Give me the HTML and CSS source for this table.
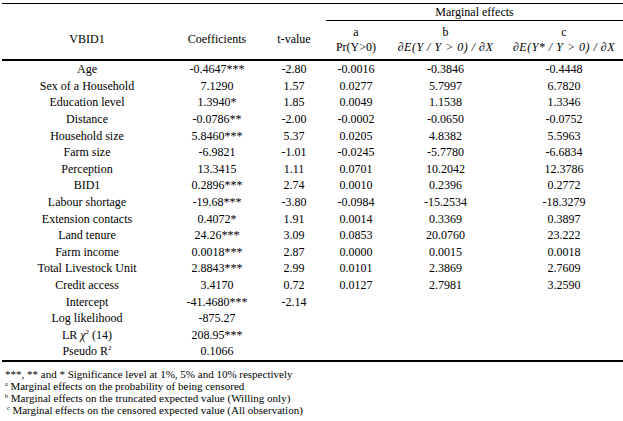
FILE: index.html
```html
<!DOCTYPE html>
<html>
<head>
<meta charset="utf-8">
<link rel="stylesheet" href="styles.css">
</head>
<body>
<div class="page">
<table class="tbl">
  <colgroup>
    <col class="c1"><col class="c2"><col class="c3"><col class="ca"><col class="cb"><col class="cc">
  </colgroup>
  <thead>
    <tr class="h1">
      <th></th><th></th><th></th>
      <th colspan="3" class="me">Marginal effects</th>
    </tr>
    <tr class="h2">
      <th>VBID1</th><th>Coefficients</th><th>t-value</th>
      <th>a<br>Pr(Y&gt;0)</th>
      <th>b<br><span class="m">∂E(Y / Y &gt; 0) / ∂X</span></th>
      <th>c<br><span class="m">∂E(Y* / Y &gt; 0) / ∂X</span></th>
    </tr>
  </thead>
  <tbody>
    <tr><td>Age</td><td>-0.4647***</td><td>-2.80</td><td>-0.0016</td><td>-0.3846</td><td>-0.4448</td></tr>
    <tr><td>Sex of a Household</td><td>7.1290</td><td>1.57</td><td>0.0277</td><td>5.7997</td><td>6.7820</td></tr>
    <tr><td>Education level</td><td>1.3940*</td><td>1.85</td><td>0.0049</td><td>1.1538</td><td>1.3346</td></tr>
    <tr><td>Distance</td><td>-0.0786**</td><td>-2.00</td><td>-0.0002</td><td>-0.0650</td><td>-0.0752</td></tr>
    <tr><td>Household size</td><td>5.8460***</td><td>5.37</td><td>0.0205</td><td>4.8382</td><td>5.5963</td></tr>
    <tr><td>Farm size</td><td>-6.9821</td><td>-1.01</td><td>-0.0245</td><td>-5.7780</td><td>-6.6834</td></tr>
    <tr><td>Perception</td><td>13.3415</td><td>1.11</td><td>0.0701</td><td>10.2042</td><td>12.3786</td></tr>
    <tr><td>BID1</td><td>0.2896***</td><td>2.74</td><td>0.0010</td><td>0.2396</td><td>0.2772</td></tr>
    <tr><td>Labour shortage</td><td>-19.68***</td><td>-3.80</td><td>-0.0984</td><td>-15.2534</td><td>-18.3279</td></tr>
    <tr><td>Extension contacts</td><td>0.4072*</td><td>1.91</td><td>0.0014</td><td>0.3369</td><td>0.3897</td></tr>
    <tr><td>Land tenure</td><td>24.26***</td><td>3.09</td><td>0.0853</td><td>20.0760</td><td>23.222</td></tr>
    <tr><td>Farm income</td><td>0.0018***</td><td>2.87</td><td>0.0000</td><td>0.0015</td><td>0.0018</td></tr>
    <tr><td>Total Livestock Unit</td><td>2.8843***</td><td>2.99</td><td>0.0101</td><td>2.3869</td><td>2.7609</td></tr>
    <tr><td>Credit access</td><td>3.4170</td><td>0.72</td><td>0.0127</td><td>2.7981</td><td>3.2590</td></tr>
    <tr><td>Intercept</td><td>-41.4680***</td><td>-2.14</td><td></td><td></td><td></td></tr>
    <tr><td>Log likelihood</td><td>-875.27</td><td></td><td></td><td></td><td></td></tr>
    <tr><td>LR <i>χ</i><sup>2</sup> (14)</td><td>208.95***</td><td></td><td></td><td></td><td></td></tr>
    <tr><td>Pseudo R<sup>2</sup></td><td>0.1066</td><td></td><td></td><td></td><td></td></tr>
  </tbody>
</table>
<div class="notes">
  <p>***, ** and * Significance level at 1%, 5% and 10% respectively</p>
  <p><sup>a</sup> Marginal effects on the probability of being censored</p>
  <p><sup>b</sup> Marginal effects on the truncated expected value (Willing only)</p>
  <p class="n3"><sup>c</sup> Marginal effects on the censored expected value (All observation)</p>
</div>
</div>
</body>
</html>
```
FILE: styles.css
```css
html, body {
  margin: 0;
  padding: 0;
  background: #fff;
}
body {
  font-family: "Liberation Serif", "Times New Roman", serif;
  color: #000;
}
.page {
  padding: 3px 0 0 2px;
}
.tbl {
  border-collapse: collapse;
  table-layout: fixed;
  width: 621px;
  font-size: 12px;
  border-top: 1px solid #000;
  border-bottom: 2px solid #000;
}
.c1 { width: 170px; }
.c2 { width: 90px; }
.c3 { width: 64px; }
.ca { width: 60px; }
.cb { width: 119px; }
.cc { width: 118px; }
.tbl th {
  font-weight: normal;
  padding: 0;
  text-align: center;
}
.h1 th {
  height: 16px;
  line-height: 14px;
  vertical-align: middle;
}
.h1 .me {
  border-bottom: 1px solid #000;
}
.h2 th {
  height: 38px;
  line-height: 15px;
  vertical-align: middle;
  border-bottom: 2px solid #000;
}
.m {
  font-style: italic;
  letter-spacing: 0.5px;
}
.tbl td {
  padding: 0;
  height: 16.6px;
  line-height: 14px;
  text-align: center;
  vertical-align: middle;
  white-space: nowrap;
}
.tbl sup {
  font-size: 7px;
  vertical-align: 5px;
  line-height: 0;
}
.notes {
  font-size: 11px;
  padding: 6px 0 0 3px;
}
.notes p {
  margin: 0;
  line-height: 12px;
  white-space: nowrap;
}
.notes sup {
  font-size: 6px;
  vertical-align: 4px;
  line-height: 0;
}
.notes .n3 {
  padding-left: 2px;
}
```
